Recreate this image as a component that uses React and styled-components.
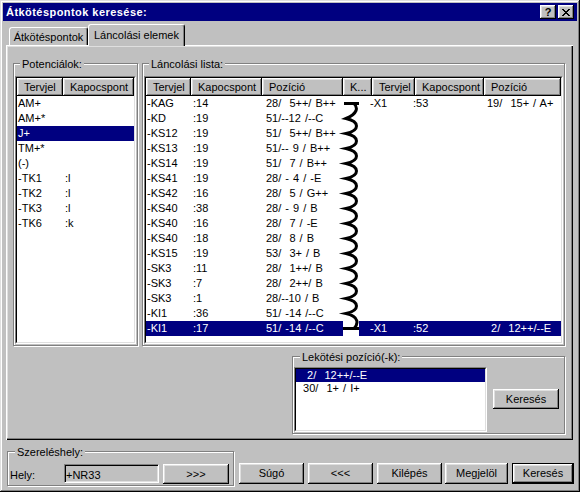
import React from 'react';
import styled, { createGlobalStyle } from 'styled-components';

const GlobalStyle = createGlobalStyle`
  html, body { margin: 0; padding: 0; background: #c0c0c0; }
  body {
    font-family: "Liberation Sans", Arial, sans-serif;
    font-size: 11px;
    color: #000;
  }
  * { box-sizing: border-box; }
`;

const raised = `
  box-shadow: inset -1px -1px #000, inset 1px 1px #fff, inset -2px -2px #808080, inset 2px 2px #dfdfdf;
`;

const Window = styled.div`
  width: 580px;
  height: 492px;
  padding: 3px;
  display: flex;
  flex-direction: column;
  background: #c0c0c0;
  box-shadow: inset -1px -1px #000, inset 1px 1px #dfdfdf, inset -2px -2px #808080, inset 2px 2px #fff;
`;

const TitleBar = styled.div`
  height: 18px;
  display: flex;
  align-items: center;
  padding: 0 3px;
  background: #000080;
  color: #fff;
`;

const TitleText = styled.div`
  font-weight: bold;
  letter-spacing: 0.45px;
  line-height: 13px;
  padding-top: 1px;
`;

const TitleButtons = styled.div`
  margin-left: auto;
  display: flex;
  gap: 2px;
`;

const TitleButton = styled.div`
  width: 16px;
  height: 14px;
  display: flex;
  align-items: center;
  justify-content: center;
  background: #c0c0c0;
  color: #000;
  font-weight: bold;
  font-size: 11px;
  line-height: 11px;
  ${raised}
`;

const TabStrip = styled.div`
  height: 21px;
  margin: 3px 0 0 3px;
  padding-left: 3px;
  display: flex;
  align-items: flex-end;
`;

const Tab = styled.div`
  position: relative;
  z-index: ${p => (p.$active ? 1 : 0)};
  width: ${p => p.$w}px;
  height: ${p => (p.$active ? 22 : 18)}px;
  margin-bottom: ${p => (p.$active ? -1 : 0)}px;
  padding-top: ${p => (p.$active ? 4 : 3)}px;
  text-align: center;
  line-height: 13px;
  white-space: nowrap;
  background: #c0c0c0;
  border: 1px solid;
  border-bottom: none;
  border-color: #fff #000 transparent #fff;
  border-radius: 3px 3px 0 0;
  box-shadow: inset -1px 0 #808080;
`;

const Panel = styled.div`
  width: 567px;
  height: 395px;
  margin-left: 3px;
  padding: 18px 8px 0 7px;
  background: #c0c0c0;
  box-shadow: inset 1px 1px #fff, inset -1px -1px #000, inset -2px -2px #808080, inset 2px 2px #dfdfdf;
`;

const TopRow = styled.div`
  height: 283px;
  display: grid;
  grid-template-columns: 125px 423px;
  column-gap: 4px;
`;

const BottomRow = styled.div`
  margin-top: 10px;
  display: flex;
  justify-content: flex-end;
`;

const Group = styled.div`
  width: ${p => (p.$w ? `${p.$w}px` : 'auto')};
  display: flex;
  flex-direction: column;
  padding: 0 1px ${p => p.$pb ?? 1}px;
  border: 1px solid #808080;
  box-shadow: 1px 1px 0 #fff, inset 1px 1px 0 #fff;
`;

const Caption = styled.div`
  align-self: flex-start;
  margin: -6px 0 0 ${p => p.$indent}px;
  padding: 0 2px;
  height: 13px;
  line-height: 13px;
  white-space: nowrap;
  background: #c0c0c0;
`;

const ListFrame = styled.div`
  flex: ${p => (p.$h ? 'none' : 1)};
  width: ${p => (p.$w ? `${p.$w}px` : 'auto')};
  height: ${p => (p.$h ? `${p.$h}px` : 'auto')};
  margin-top: ${p => p.$mt || 0}px;
  display: flex;
  border: 1px solid;
  border-color: #808080 #fff #fff #808080;
`;

const ListInner = styled.div`
  flex: 1;
  display: flex;
  flex-direction: column;
  overflow: hidden;
  background: #fff;
  border: 1px solid;
  border-color: #000 #dfdfdf #dfdfdf #000;
`;

const Header = styled.div`
  flex: none;
  height: 18px;
  display: grid;
  grid-template-columns: ${p => p.$cols};
`;

const HeaderCell = styled.div`
  padding: 3px 0 0 7px;
  line-height: 13px;
  white-space: nowrap;
  overflow: hidden;
  background: #c0c0c0;
  ${raised}
`;

const Body = styled.div`
  position: relative;
  flex: 1;
`;

const Row = styled.div`
  height: ${p => p.$h || 15}px;
  line-height: ${p => p.$h || 15}px;
  display: grid;
  grid-template-columns: ${p => p.$cols};
`;

const Cell = styled.div`
  text-indent: ${p => p.$indent || 0}px;
  word-spacing: ${p => (p.$pos ? 1 : 0)}px;
  white-space: pre;
  background: ${p => (p.$sel ? '#000080' : 'transparent')};
  color: ${p => (p.$sel ? '#fff' : '#000')};
`;

const LinkCell = styled.div`
  background: ${p =>
    p.$sel ? 'linear-gradient(to right, transparent 16px, #000080 16px)' : 'transparent'};
`;

const Chain = styled.svg`
  position: absolute;
  left: 197px;
  top: 0;
  overflow: visible;
  pointer-events: none;
`;

const GroupContent = styled.div`
  margin-top: 3px;
  display: flex;
  align-items: flex-start;
`;

const Button = styled.button`
  flex: none;
  width: ${p => p.$w}px;
  height: ${p => p.$h || 21}px;
  margin: ${p => p.$mt || 0}px 0 0 ${p => p.$ml || 0}px;
  padding: 0;
  font: inherit;
  line-height: 13px;
  color: #000;
  background: #c0c0c0;
  border: ${p => (p.$default ? '1px solid #000' : 'none')};
  ${raised}
`;

const Footer = styled.div`
  margin-top: 11px;
  padding-left: 4px;
  display: flex;
  align-items: flex-start;
`;

const FieldRow = styled.div`
  height: 20px;
  margin-top: 5px;
  display: flex;
  align-items: flex-start;
`;

const FieldLabel = styled.div`
  width: 55px;
  padding: 5px 0 0 1px;
  line-height: 13px;
`;

const Field = styled.div`
  width: 95px;
  height: 19px;
  padding: 4px 0 0 1px;
  line-height: 13px;
  background: #c0c0c0;
  border: 1px solid;
  border-color: #808080 #fff #fff #808080;
  box-shadow: inset 1px 1px #000, inset -1px -1px #dfdfdf;
`;

const ButtonRow = styled.div`
  margin: 12px 0 0 5px;
  display: flex;
`;

const CloseGlyph = () => {
  const bits = ['XX....XX', '.XX..XX.', '..XXXX..', '...XX...', '..XXXX..', '.XX..XX.', 'XX....XX'];
  return (
    <svg width="8" height="7" viewBox="0 0 8 7" shapeRendering="crispEdges">
      {bits.flatMap((r, y) =>
        r.split('').map((c, x) => (c === 'X' ? <rect key={`${x}-${y}`} x={x} y={y} width="1" height="1" fill="#000" /> : null))
      )}
    </svg>
  );
};

const potCols = '46px 1fr';
const potRows = [
  ['AM+', ''],
  ['AM+*', ''],
  ['J+', '', true],
  ['TM+*', ''],
  ['(-)', ''],
  ['-TK1', ':l'],
  ['-TK2', ':l'],
  ['-TK3', ':l'],
  ['-TK6', ':k'],
];

const chainCols = '45px 71px 81px 29px 43px 69px 1fr';
const chainHeaders = ['Tervjel', 'Kapocspont', 'Pozíció', 'K...', 'Tervjel', 'Kapocspont', 'Pozíció'];
const chainRows = [
  ['-KAG', ':14', '28/  5++/ B++'],
  ['-KD', ':19', '51/--12 /--C'],
  ['-KS12', ':19', '51/  5++/ B++'],
  ['-KS13', ':19', '51/-- 9 / B++'],
  ['-KS14', ':19', '51/  7 / B++'],
  ['-KS41', ':19', '28/ - 4 / -E'],
  ['-KS42', ':16', '28/  5 / G++'],
  ['-KS40', ':38', '28/ - 9 / B'],
  ['-KS40', ':16', '28/  7 / -E'],
  ['-KS40', ':18', '28/  8 / B'],
  ['-KS15', ':19', '53/  3+ / B'],
  ['-SK3', ':11', '28/  1++/ B'],
  ['-SK3', ':7', '28/  2++/ B'],
  ['-SK3', ':1', '28/--10 / B'],
  ['-KI1', ':36', '51/ -14 /--C'],
  ['-KI1', ':17', '51/ -14 /--C'],
];
const linked = {
  0: ['-X1', ':53', '19/  15+ / A+'],
  15: ['-X1', ':52', ' 2/  12++/--E'],
};
const selectedRow = 15;

const chainPath = (() => {
  const c = i => 7.5 + 15 * i;
  let d = `M11 ${c(0)} C15 ${c(0) + 4} 15 ${c(0) + 10} 3 ${c(1)}`;
  for (let i = 1; i < 14; i++) d += ` C17 ${c(i) + 3} 17 ${c(i) + 12} 3 ${c(i + 1)}`;
  d += ` C17 ${c(14) + 3} 15 ${c(14) + 11} 11 ${c(15)}`;
  return d;
})();

const positions = [
  ['  2/  12++/--E', true],
  [' 30/  1+ / I+', false],
];

const App = () => {
  return (
    <>
      <GlobalStyle />
      <Window>
        <TitleBar>
          <TitleText>Átkötéspontok keresése:</TitleText>
          <TitleButtons>
            <TitleButton>?</TitleButton>
            <TitleButton>
              <CloseGlyph />
            </TitleButton>
          </TitleButtons>
        </TitleBar>

        <TabStrip>
          <Tab $w={79}>Átkötéspontok</Tab>
          <Tab $w={97} $active>Láncolási elemek</Tab>
        </TabStrip>

        <Panel>
          <TopRow>
            <Group>
              <Caption $indent={5}>Potenciálok:</Caption>
              <ListFrame $mt={5}>
                <ListInner>
                  <Header $cols={potCols}>
                    <HeaderCell>Tervjel</HeaderCell>
                    <HeaderCell>Kapocspont</HeaderCell>
                  </Header>
                  <Body>
                    {potRows.map(([t, k, sel], i) => (
                      <Row key={i} $cols={potCols}>
                        <Cell $indent={1} $sel={sel}>{t}</Cell>
                        <Cell $indent={2} $sel={sel}>{k}</Cell>
                      </Row>
                    ))}
                  </Body>
                </ListInner>
              </ListFrame>
            </Group>

            <Group>
              <Caption $indent={5}>Láncolási lista:</Caption>
              <ListFrame $mt={5}>
                <ListInner>
                  <Header $cols={chainCols}>
                    {chainHeaders.map((h, i) => (
                      <HeaderCell key={i}>{h}</HeaderCell>
                    ))}
                  </Header>
                  <Body>
                    {chainRows.map(([t, k, p], i) => {
                      const sel = i === selectedRow;
                      const right = linked[i] || ['', '', ''];
                      return (
                        <Row key={i} $cols={chainCols}>
                          <Cell $indent={1} $sel={sel}>{t}</Cell>
                          <Cell $indent={2} $sel={sel}>{k}</Cell>
                          <Cell $indent={4} $pos $sel={sel}>{p}</Cell>
                          <LinkCell $sel={sel} />
                          <Cell $indent={-2} $sel={sel}>{right[0]}</Cell>
                          <Cell $indent={-2} $sel={sel}>{right[1]}</Cell>
                          <Cell $indent={3} $pos $sel={sel}>{right[2]}</Cell>
                        </Row>
                      );
                    })}
                    <Chain width="18" height="240" viewBox="0 0 18 240">
                      <path
                        d={`M1 7.5H16 ${chainPath} M0 232.5H16`}
                        fill="none"
                        stroke="#000"
                        strokeWidth="3"
                        strokeMiterlimit="10"
                      />
                    </Chain>
                  </Body>
                </ListInner>
              </ListFrame>
            </Group>
          </TopRow>

          <BottomRow>
            <Group $w={273}>
              <Caption $indent={6}>Lekötési pozíció(-k):</Caption>
              <GroupContent>
                <ListFrame $w={193} $h={65}>
                  <ListInner>
                    {positions.map(([p, sel], i) => (
                      <Row key={i} $cols="1fr" $h={13}>
                        <Cell $indent={3} $pos $sel={sel}>{p}</Cell>
                      </Row>
                    ))}
                  </ListInner>
                </ListFrame>
                <Button $w={66} $h={20} $ml={6} $mt={22}>Keresés</Button>
              </GroupContent>
            </Group>
          </BottomRow>
        </Panel>

        <Footer>
          <Group $w={227}>
            <Caption $indent={6}>Szereléshely:</Caption>
            <FieldRow>
              <FieldLabel>Hely:</FieldLabel>
              <Field>+NR33</Field>
              <Button $w={66} $h={20} $ml={4}>&gt;&gt;&gt;</Button>
            </FieldRow>
          </Group>
          <ButtonRow>
            <Button $w={65}>Súgó</Button>
            <Button $w={65} $ml={4}>&lt;&lt;&lt;</Button>
            <Button $w={65} $ml={4}>Kilépés</Button>
            <Button $w={63} $ml={3}>Megjelöl</Button>
            <Button $w={62} $ml={4} $default>Keresés</Button>
          </ButtonRow>
        </Footer>
      </Window>
    </>
  );
};

export default App;
